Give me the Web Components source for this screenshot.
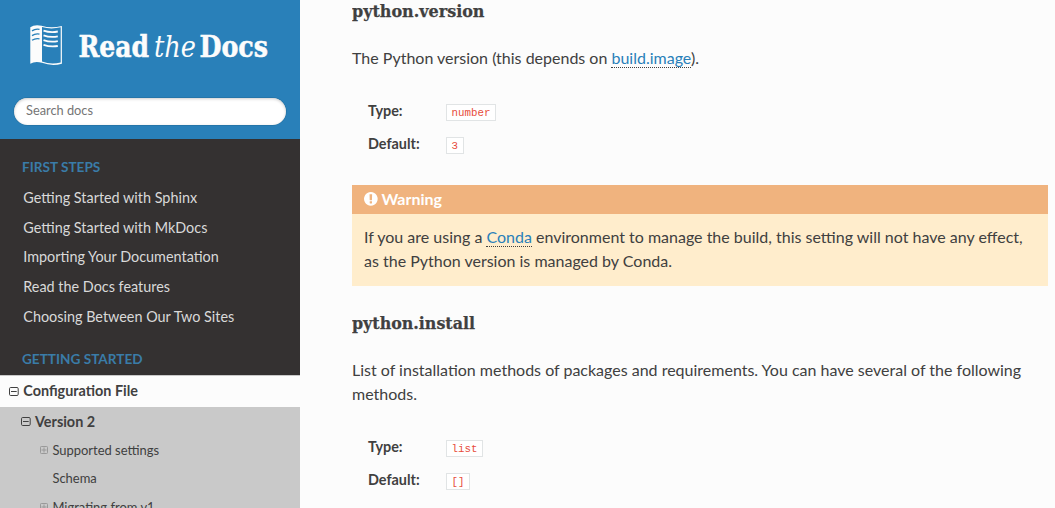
<!DOCTYPE html>
<html lang="en">
<head>
<meta charset="utf-8">
<title>Configuration File — Read the Docs</title>
<style>
html,body{margin:0;height:100%;overflow:hidden}
body{font:16px/24px Lato,"Liberation Sans",sans-serif;color:#404040;background:#fcfcfc}
</style>
</head>
<body>
<docs-page>
  <docs-sidebar slot="nav">
    <nav-caption>First Steps</nav-caption>
    <nav-item>Getting Started with Sphinx</nav-item>
    <nav-item>Getting Started with MkDocs</nav-item>
    <nav-item>Importing Your Documentation</nav-item>
    <nav-item>Read the Docs features</nav-item>
    <nav-item>Choosing Between Our Two Sites</nav-item>
    <nav-caption>Getting Started</nav-caption>
    <nav-item level="current" toggle="minus">Configuration File</nav-item>
    <nav-item level="2" toggle="minus">Version 2</nav-item>
    <nav-item level="3" toggle="plus">Supported settings</nav-item>
    <nav-item level="3">Schema</nav-item>
    <nav-item level="3" toggle="plus">Migrating from v1</nav-item>
  </docs-sidebar>
  <slab-heading text="python.version" width="132.5"></slab-heading>
  <doc-text>The Python version (this depends on <doc-link>build.image</doc-link>).</doc-text>
  <field-list>
    <field-row name="Type:">number</field-row>
    <field-row name="Default:">3</field-row>
  </field-list>
  <doc-warning>If you are using a <doc-link>Conda</doc-link> environment to manage the build, this setting will not have any effect, as the Python version is managed by Conda.</doc-warning>
  <slab-heading text="python.install" width="123"></slab-heading>
  <doc-text>List of installation methods of packages and requirements. You can have several of the following methods.</doc-text>
  <field-list>
    <field-row name="Type:">list</field-row>
    <field-row name="Default:">[]</field-row>
  </field-list>
</docs-page>
<script>
const define = (name, render) => customElements.define(name, class extends HTMLElement {
  connectedCallback() {
    if (!this.shadowRoot) this.attachShadow({mode: "open"}).innerHTML = render(this);
  }
});

define("docs-page", () => `
<style>
:host{display:grid;grid-template-columns:300px 1fr;height:508px;overflow:hidden}
main{padding:0 7px 0 52px;margin-top:-2px;min-width:0}
</style>
<slot name="nav"></slot><main><slot></slot></main>`);

define("docs-sidebar", () => `
<style>
:host{display:block;background:#343131;height:508px;overflow:hidden}
nav{padding-top:.1px}
</style>
<brand-header></brand-header><nav><slot></slot></nav>`);

define("brand-header", () => `
<style>
:host{display:flex;flex-direction:column;height:139px;background:#2980b9}
svg{display:block;width:300px;height:98px}
.logo{font-family:"Roboto Slab","DejaVu Serif Condensed","DejaVu Serif",serif;fill:#fcfcfc}
input{box-sizing:border-box;width:272px;height:27px;margin:0 14px;padding:0 12px 3px;border:0;border-radius:50px;background:#fff;font:12.8px Lato,sans-serif;box-shadow:inset 0 1px 3px #ccc,0 0 0 .7px #2472a4}
input::placeholder{color:#757575;opacity:1}
</style>
<svg viewBox="0 0 300 98" aria-label="Read the Docs">
  <path fill="#fcfcfc" d="M30.3 27.2Q34.5 24.2 41.5 25.7Q51 28.7 61.9 26V63.7Q52 66.6 42 62.8Q35 60.7 30.3 63.8Z"/>
  <path fill="#2980b9" d="M42 27.1Q51 29.7 60.7 27.3V62.4Q51 64.8 42 61.5Z"/>
  <g fill="none" stroke="#2980b9" stroke-width="1.3"><path d="M32 30.9Q35.5 28.5 39.5 29.4M32 35.6Q35.5 33.2 39.5 34.1M32 40.3Q35.5 37.9 39.5 38.8"/></g>
  <g fill="none" stroke="#fcfcfc" stroke-width="1.8"><path d="M43.5 30.6Q50.5 33.1 57.8 31.5M43.5 35.3Q50.5 37.8 57.8 36.3M43.5 40.1Q50.5 42.6 57.8 41.1M43.5 44.8Q50.5 47.3 57.8 46"/></g>
  <g class="logo">
    <text x="78.5" y="56.5" font-size="30" font-weight="700" stroke="#fcfcfc" stroke-width=".5" textLength="70.5" lengthAdjust="spacingAndGlyphs">Read</text>
    <text x="154" y="56.5" font-size="29" font-style="italic" textLength="42" lengthAdjust="spacingAndGlyphs">the</text>
    <text x="199.5" y="56.5" font-size="30" font-weight="700" stroke="#fcfcfc" stroke-width=".5" textLength="68.5" lengthAdjust="spacingAndGlyphs">Docs</text>
  </g>
</svg>
<input type="text" placeholder="Search docs">`);

define("nav-caption", () => `
<style>
:host{display:block;margin-top:12px;padding:0 22px;height:32.1px;line-height:32px;font-size:13.6px;font-weight:700;color:#3a7ca8;text-transform:uppercase;white-space:nowrap}
</style><slot></slot>`);

define("nav-item", el => {
  const t = el.getAttribute("toggle");
  const icon = t === "minus"
    ? `<svg viewBox="0 0 10 9"><rect x=".5" y=".5" width="8.7" height="8" rx="1.2"/><path d="M2 4.5H7.7"/></svg>`
    : t === "plus"
    ? `<svg viewBox="0 0 8 8"><rect x=".5" y=".5" width="7" height="7" rx=".8"/><path d="M1.5 4H6.5M4 1.5V6.5"/></svg>` : "";
  return `
<style>
:host{display:flex;align-items:center;box-sizing:border-box;height:29.65px;padding-left:23.3px;line-height:18px;font-size:14.4px;color:#d9d9d9;white-space:nowrap}
svg{width:10px;height:9px;margin-left:-14.1px;margin-right:4.1px;flex:none;fill:none;stroke:#404040;stroke-width:1}
:host([level=current]){height:31.65px;border:solid #c9c9c9;border-width:1px 0 0;background:#fcfcfc;color:#404040;font-weight:700;padding-bottom:1px}
:host([level="2"]){height:28.8px;padding-left:35px;background:#c9c9c9;color:#404040;font-weight:700}
:host([level="3"]){height:28.3px;padding-left:52.4px;background:#c9c9c9;color:#404040;font-size:12.96px}
:host([level="3"]) svg{stroke:#999;width:8px;height:8px;margin-left:-12.4px;margin-right:4.4px}
</style>${icon}<span><slot></slot></span>`;
});

define("slab-heading", el => `
<style>
:host{display:block;height:24px;margin-bottom:24px}
svg{display:block;width:200px;height:30px}
text{font:700 17.5px "Roboto Slab","DejaVu Serif Condensed","DejaVu Serif",serif;fill:#404040;stroke:#404040;stroke-width:.25px}
</style>
<svg role="heading" aria-level="3"><text x="0" y="19.3" textLength="${el.getAttribute("width")}" lengthAdjust="spacingAndGlyphs">${el.getAttribute("text")}</text></svg>`);

define("doc-text", () => `<style>:host{display:block;margin-bottom:24px}</style><slot></slot>`);

define("doc-link", () => `
<style>
:host{display:inline;color:#2980b9;border-bottom:1px dotted #404040}
</style><slot></slot>`);

define("field-list", () => `
<style>:host{display:block;margin-bottom:24px}</style><slot></slot>`);

define("field-row", el => `
<style>
:host{display:grid;grid-template-columns:78px 1fr;align-items:center;height:33.3px;padding-left:16px;font-size:14.4px}
b{line-height:18px;padding-top:.6px}
code{justify-self:start;box-sizing:border-box;height:17px;margin-top:4px;border:1px solid #e1e4e5;background:#fff;padding:2px 4.6px;font:10.8px/12px "Liberation Mono",monospace;color:#e74c3c}
</style><b>${el.getAttribute("name")}</b><code><slot></slot></code>`);

define("doc-warning", () => `
<style>
:host{display:block;background:#ffedcc;margin-bottom:24px;padding-bottom:13px}
header{display:flex;align-items:center;height:29px;padding:0 12px;margin-bottom:11px;background:#f0b37e;color:#fff;font-weight:700}
svg{width:13.7px;height:13.7px;margin-right:3.8px}
div{padding:0 12px}
</style>
<header><svg viewBox="128 128 1536 1536" fill="#fff"><path d="M896 128q209 0 385.5 103t279.5 279.5 103 385.5-103 385.5-279.5 279.5-385.5 103-385.5-103-279.5-279.5-103-385.5 103-385.5 279.5-279.5 385.5-103zm128 1247v-190q0-14-9-23.5t-22-9.5h-192q-13 0-23 10t-10 23v190q0 13 10 23t23 10h192q13 0 22-9.5t9-23.5zm-2-344l18-621q0-12-10-18-10-8-24-8h-220q-14 0-24 8-10 6-10 18l17 621q0 10 10 17.5t24 7.5h185q14 0 23.5-7.5t10.5-17.5z"/></svg>Warning</header>
<div><slot></slot></div>`);
</script>
</body>
</html>
